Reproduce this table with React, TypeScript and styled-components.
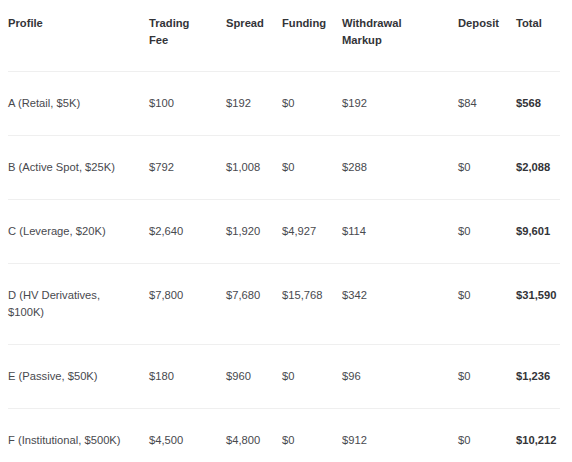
import React from 'react'
import styled, { createGlobalStyle } from 'styled-components'

const GlobalStyle = createGlobalStyle`
  body {
    margin: 0;
    background: #ffffff;
    font-family: 'Liberation Sans', Arial, sans-serif;
  }
`

type Row = {
  profile: string
  trading: string
  spread: string
  funding: string
  withdrawal: string
  deposit: string
  total: string
}

const rows: Row[] = [
  { profile: 'A (Retail, $5K)', trading: '$100', spread: '$192', funding: '$0', withdrawal: '$192', deposit: '$84', total: '$568' },
  { profile: 'B (Active Spot, $25K)', trading: '$792', spread: '$1,008', funding: '$0', withdrawal: '$288', deposit: '$0', total: '$2,088' },
  { profile: 'C (Leverage, $20K)', trading: '$2,640', spread: '$1,920', funding: '$4,927', withdrawal: '$114', deposit: '$0', total: '$9,601' },
  { profile: 'D (HV Derivatives, $100K)', trading: '$7,800', spread: '$7,680', funding: '$15,768', withdrawal: '$342', deposit: '$0', total: '$31,590' },
  { profile: 'E (Passive, $50K)', trading: '$180', spread: '$960', funding: '$0', withdrawal: '$96', deposit: '$0', total: '$1,236' },
  { profile: 'F (Institutional, $500K)', trading: '$4,500', spread: '$4,800', funding: '$0', withdrawal: '$912', deposit: '$0', total: '$10,212' },
]

const columns = [
  { label: 'Profile', width: 141 },
  { label: 'Trading Fee', width: 77 },
  { label: 'Spread', width: 56 },
  { label: 'Funding', width: 60 },
  { label: 'Withdrawal Markup', width: 116 },
  { label: 'Deposit', width: 58 },
  { label: 'Total', width: 44 },
]

export default function App(): React.ReactElement {
  return (
    <>
      <GlobalStyle />
      <Wrapper>
        <Table>
          <colgroup>
            {columns.map((c) => (
              <col key={c.label} style={{ width: c.width }} />
            ))}
          </colgroup>
          <thead>
            <tr>
              {columns.map((c) => (
                <HeadCell key={c.label}>{c.label}</HeadCell>
              ))}
            </tr>
          </thead>
          <tbody>
            {rows.map((r) => (
              <BodyRow key={r.profile}>
                <Cell>{r.profile}</Cell>
                <Cell>{r.trading}</Cell>
                <Cell>{r.spread}</Cell>
                <Cell>{r.funding}</Cell>
                <Cell>{r.withdrawal}</Cell>
                <Cell>{r.deposit}</Cell>
                <Cell $strong>{r.total}</Cell>
              </BodyRow>
            ))}
          </tbody>
        </Table>
      </Wrapper>
    </>
  )
}

const Wrapper = styled.div`
  padding: 0 8px;
  width: 552px;
`

const Table = styled.table`
  width: 552px;
  table-layout: fixed;
  border-collapse: collapse;
  font-size: 11.2px;
  line-height: 17px;
`

const HeadCell = styled.th`
  padding: 15px 18px 22px 0;
  text-align: left;
  vertical-align: top;
  font-weight: 700;
  color: #333438;
  border-bottom: 1px solid #efefef;
`

const BodyRow = styled.tr`
  border-bottom: 1px solid #efefef;
`

const Cell = styled.td<{ $strong?: boolean }>`
  padding: 23px 18px 23px 0;
  vertical-align: top;
  white-space: ${(p) => (p.$strong ? 'nowrap' : 'normal')};
  font-weight: ${(p) => (p.$strong ? 700 : 400)};
  color: ${(p) => (p.$strong ? '#333438' : '#48494e')};
`
